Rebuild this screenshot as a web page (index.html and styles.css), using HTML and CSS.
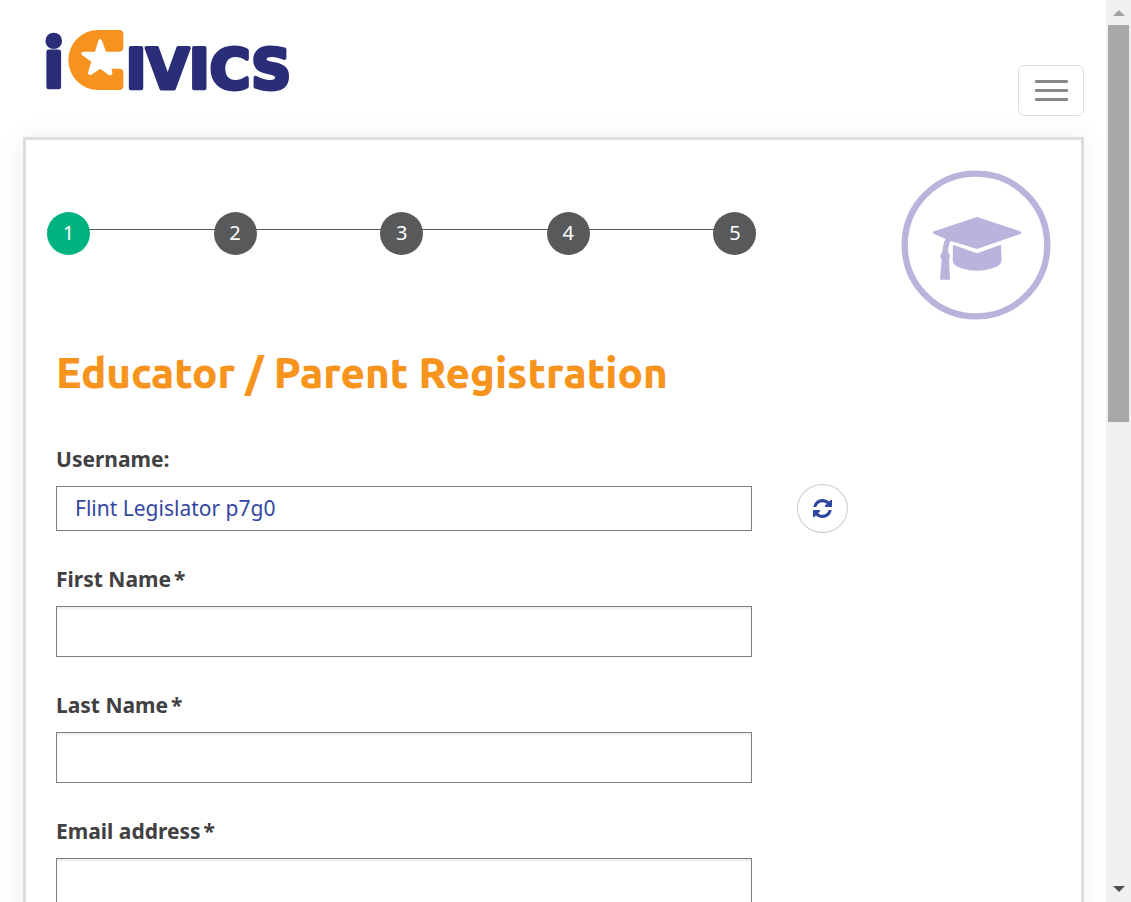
FILE: index.html
```html
<!DOCTYPE html>
<html lang="en">
<head>
<meta charset="utf-8">
<meta name="viewport" content="width=device-width, initial-scale=1">
<title>iCivics Registration</title>
<link rel="stylesheet" href="styles.css">
</head>
<body>
<div class="page">
  <header class="header">
    <a class="brand" href="#" aria-label="iCivics">
      <svg class="logo" viewBox="45 27 768 186">
        <text class="logo-text logo-initial" x="42" y="202">i</text>
        <path class="logo-mark" d="M204 30H268Q280 30 280 42V82Q280 95 268 95H228L216 62Q210 52 205 62L195 95H160Q149 98 157 106L184 125L174 158Q174 168 184 164L211 146L236 165Q248 168 247 157L244 146H268Q280 146 280 156V198Q280 210 268 210H204A89 90 0 0 1 204 30Z"/>
        <text class="logo-text" x="287" y="204">IVICS</text>
      </svg>
    </a>
    <button class="menu" type="button" aria-label="Menu"><span></span><span></span><span></span></button>
  </header>
  <main class="card">
    <div class="top">
      <ol class="steps">
        <li class="step current">1</li>
        <li class="step">2</li>
        <li class="step">3</li>
        <li class="step">4</li>
        <li class="step">5</li>
      </ol>
      <svg class="badge" viewBox="0 0 450 450" aria-hidden="true">
        <circle cx="225" cy="225" r="214" fill="none" stroke="#b9b4dc" stroke-width="19"/>
        <g fill="#b9b4dc">
          <path d="M228 141L358 184Q364 188 358 192L228 237L149 213Q142 224 141 245Q150 255 144 270L147 329H117L122 270Q114 255 124 245Q126 220 134 207L99 192Q92 188 99 184Z"/>
          <path d="M156 224L228 250L300 224L302 270Q302 286 274 295Q228 310 181 295Q155 286 155 270Z"/>
        </g>
      </svg>
    </div>
    <h1 class="title">Educator / Parent Registration</h1>
    <form class="form">
      <div class="field">
        <label for="username">Username:</label>
        <div class="row">
          <input class="input username" id="username" type="text" value="Flint Legislator p7g0" readonly>
          <button class="refresh" type="button" aria-label="New username">
            <svg viewBox="0 0 1536 1536" aria-hidden="true"><path d="M1511 928q0 5-1 7-64 268-268 434.500T764 1536q-146 0-282.500-55T238 1324l-129 129q-19 19-45 19t-45-19-19-45V960q0-26 19-45t45-19h448q26 0 45 19t19 45-19 45l-137 137q71 66 161 102t187 36q134 0 250-65t186-179q11-17 53-117 8-23 30-23h192q13 0 22.500 9.500t9.500 22.500zM1536 128v448q0 26-19 45t-45 19h-448q-26 0-45-19t-19-45 19-45l138-138Q969 256 768 256q-134 0-250 65T332 500q-11 17-53 117-8 23-30 23H50q-13 0-22.500-9.500T18 608v-7q65-268 270-434.500T768 0q146 0 284 55.500T1297 212l130-129q19-19 45-19t45 19 19 45z"/></svg>
          </button>
        </div>
      </div>
      <div class="field">
        <label for="first">First Name<span class="req">*</span></label>
        <input class="input" id="first" type="text" required>
      </div>
      <div class="field">
        <label for="last">Last Name<span class="req">*</span></label>
        <input class="input" id="last" type="text" required>
      </div>
      <div class="field">
        <label for="email">Email address<span class="req">*</span></label>
        <input class="input" id="email" type="email" required>
      </div>
    </form>
  </main>
</div>
<div class="scrollbar" aria-hidden="true">
  <svg class="arrow" viewBox="0 0 12 6"><path fill="#a3a3a3" d="M6 0L12 6H0Z"/></svg>
  <div class="thumb"></div>
  <svg class="arrow" viewBox="0 0 12 6"><path fill="#505050" d="M0 0H12L6 6Z"/></svg>
</div>
</body>
</html>
```
FILE: styles.css
```css
* { box-sizing: border-box; }

body {
  display: flex;
  height: 100vh;
  margin: 0;
  overflow: hidden;
  background: #fff;
  color: #414042;
  font-family: "Noto Sans", sans-serif;
  font-size: 21px;
}

.page { flex: 1; min-width: 0; height: 100%; overflow: hidden; padding: 0 22px 0 23px; }

.header {
  display: flex;
  justify-content: space-between;
  align-items: flex-start;
  height: 137px;
  padding: 29px 0 0 22px;
}

.brand { display: block; }
.logo { display: block; width: 256px; height: 62px; overflow: visible; }
.logo-text {
  fill: #2a2e78;
  stroke: #2a2e78;
  stroke-width: 12px;
  stroke-linejoin: round;
  font: bold 166px "DejaVu Sans", sans-serif;
}
.logo-initial { stroke-width: 14px; font-family: Ubuntu, "DejaVu Sans", sans-serif; font-size: 202px; font-weight: 800; }
.logo-mark { fill: #f6921e; }

.menu {
  display: flex;
  flex-direction: column;
  justify-content: center;
  align-items: center;
  gap: 6px;
  width: 66px;
  height: 51px;
  margin-top: 36px;
  padding: 0;
  border: 1px solid #ddd;
  border-radius: 6px;
  background: #fff;
}
.menu span { width: 33px; height: 3px; border-radius: 1px; background: #888; }

.card {
  padding: 30px;
  border: 3px solid #ddd;
  background: #fff;
  box-shadow: 0 0 25px rgba(0, 0, 0, 0.07);
}

.top { display: flex; justify-content: space-between; align-items: flex-start; }

.steps {
  display: flex;
  justify-content: space-between;
  width: 71.3%;
  margin: 42px 0 0 -9px;
  padding: 0;
  list-style: none;
  background: linear-gradient(#58595b, #58595b) 0 17px / 100% 1px no-repeat;
}
.step {
  width: 43px;
  height: 43px;
  border-radius: 50%;
  background: #58595b;
  color: #fff;
  font-size: 20px;
  line-height: 42px;
  text-align: center;
}
.current { background: #00b280; }

.badge { width: 150px; height: 150px; }

.title {
  margin: 26px 0 0;
  color: #f7941e;
  font-family: Ubuntu, "Noto Sans", sans-serif;
  font-size: 42px;
  font-weight: 800;
  line-height: 54px;
}

.form { display: flex; flex-direction: column; gap: 33px; margin-top: 44px; }
.field label { display: block; margin-bottom: 12px; font-weight: bold; line-height: 30px; }
.req { padding-left: 3px; }

.row { display: flex; align-items: center; gap: 45px; height: 45px; }

.input {
  display: block;
  width: 69.9%;
  height: 51px;
  padding: 0 18px 2px;
  border: 1px solid #808080;
  border-radius: 0;
  background: #fff;
  box-shadow: inset 0 2px 2px rgba(0, 0, 0, 0.08);
  color: #3546a0;
  font: inherit;
}
.username { height: 45px; box-shadow: none; }

.refresh {
  display: flex;
  justify-content: center;
  align-items: center;
  width: 51px;
  height: 49px;
  padding: 0;
  border: 1px solid #ccc;
  border-radius: 50%;
  background: #fff;
}
.refresh svg { width: 19px; height: 19px; fill: #2f479f; }

.scrollbar {
  display: flex;
  flex-direction: column;
  align-items: center;
  width: 25px;
  padding: 10px 2px;
  background: #f0f0f0;
}
.arrow { width: 12px; height: 6px; }
.thumb { width: 21px; height: 45%; margin: 9px 0 auto; background: #a8a8a8; }
```
